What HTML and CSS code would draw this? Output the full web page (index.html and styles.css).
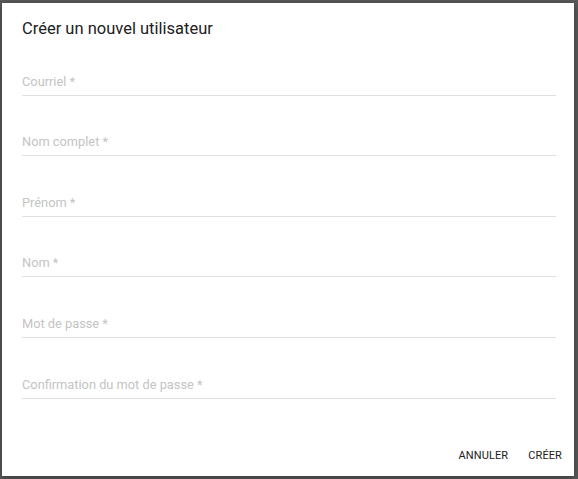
FILE: index.html
```html
<!DOCTYPE html>
<html lang="fr">
<head>
<meta charset="utf-8">
<title>Créer un nouvel utilisateur</title>
<link rel="stylesheet" href="styles.css">
</head>
<body>
<div class="dialog">
  <h2 class="dialog-title">Créer un nouvel utilisateur</h2>
  <form class="dialog-content">
    <div class="field"><span class="label">Courriel *</span></div>
    <div class="field"><span class="label">Nom complet *</span></div>
    <div class="field"><span class="label">Prénom *</span></div>
    <div class="field"><span class="label">Nom *</span></div>
    <div class="field"><span class="label">Mot de passe *</span></div>
    <div class="field"><span class="label">Confirmation du mot de passe *</span></div>
  </form>
  <div class="dialog-actions">
    <button type="button" class="btn">Annuler</button>
    <button type="button" class="btn">Créer</button>
  </div>
</div>
</body>
</html>
```
FILE: styles.css
```css
html, body {
  margin: 0;
  padding: 0;
  height: 100%;
}
body {
  background: #5a5a5a;
  font-family: Roboto, "Liberation Sans", sans-serif;
  box-sizing: border-box;
  padding: 3px 4px 3px 2px;
}
.dialog {
  background: #fff;
  height: 473px;
  box-sizing: border-box;
  padding: 0 18px 0 20px;
  display: flex;
  flex-direction: column;
  box-shadow: 0 2px 8px rgba(0,0,0,0.4);
}
.dialog-title {
  margin: 0;
  padding-top: 17px;
  font-size: 16.5px;
  line-height: 18px;
  font-weight: 400;
  color: #212121;
  height: 15px;
}
.dialog-content {
  display: flex;
  flex-direction: column;
}
.field {
  height: 60.6px;
  box-sizing: border-box;
  border-bottom: 1px solid #e0e0e0;
  display: flex;
  align-items: flex-end;
  padding-bottom: 5px;
}
.label {
  font-size: 12.8px;
  line-height: 16px;
  color: #c4c4c4;
}
.dialog-actions {
  margin-top: auto;
  display: flex;
  justify-content: flex-end;
  gap: 20px;
  padding: 0 0 13px;
  margin-right: -6px;
}
.btn {
  background: none;
  border: 0;
  padding: 0;
  font-family: inherit;
  font-size: 11px;
  line-height: 14px;
  text-transform: uppercase;
  color: #212121;
  letter-spacing: 0.1px;
}
```
